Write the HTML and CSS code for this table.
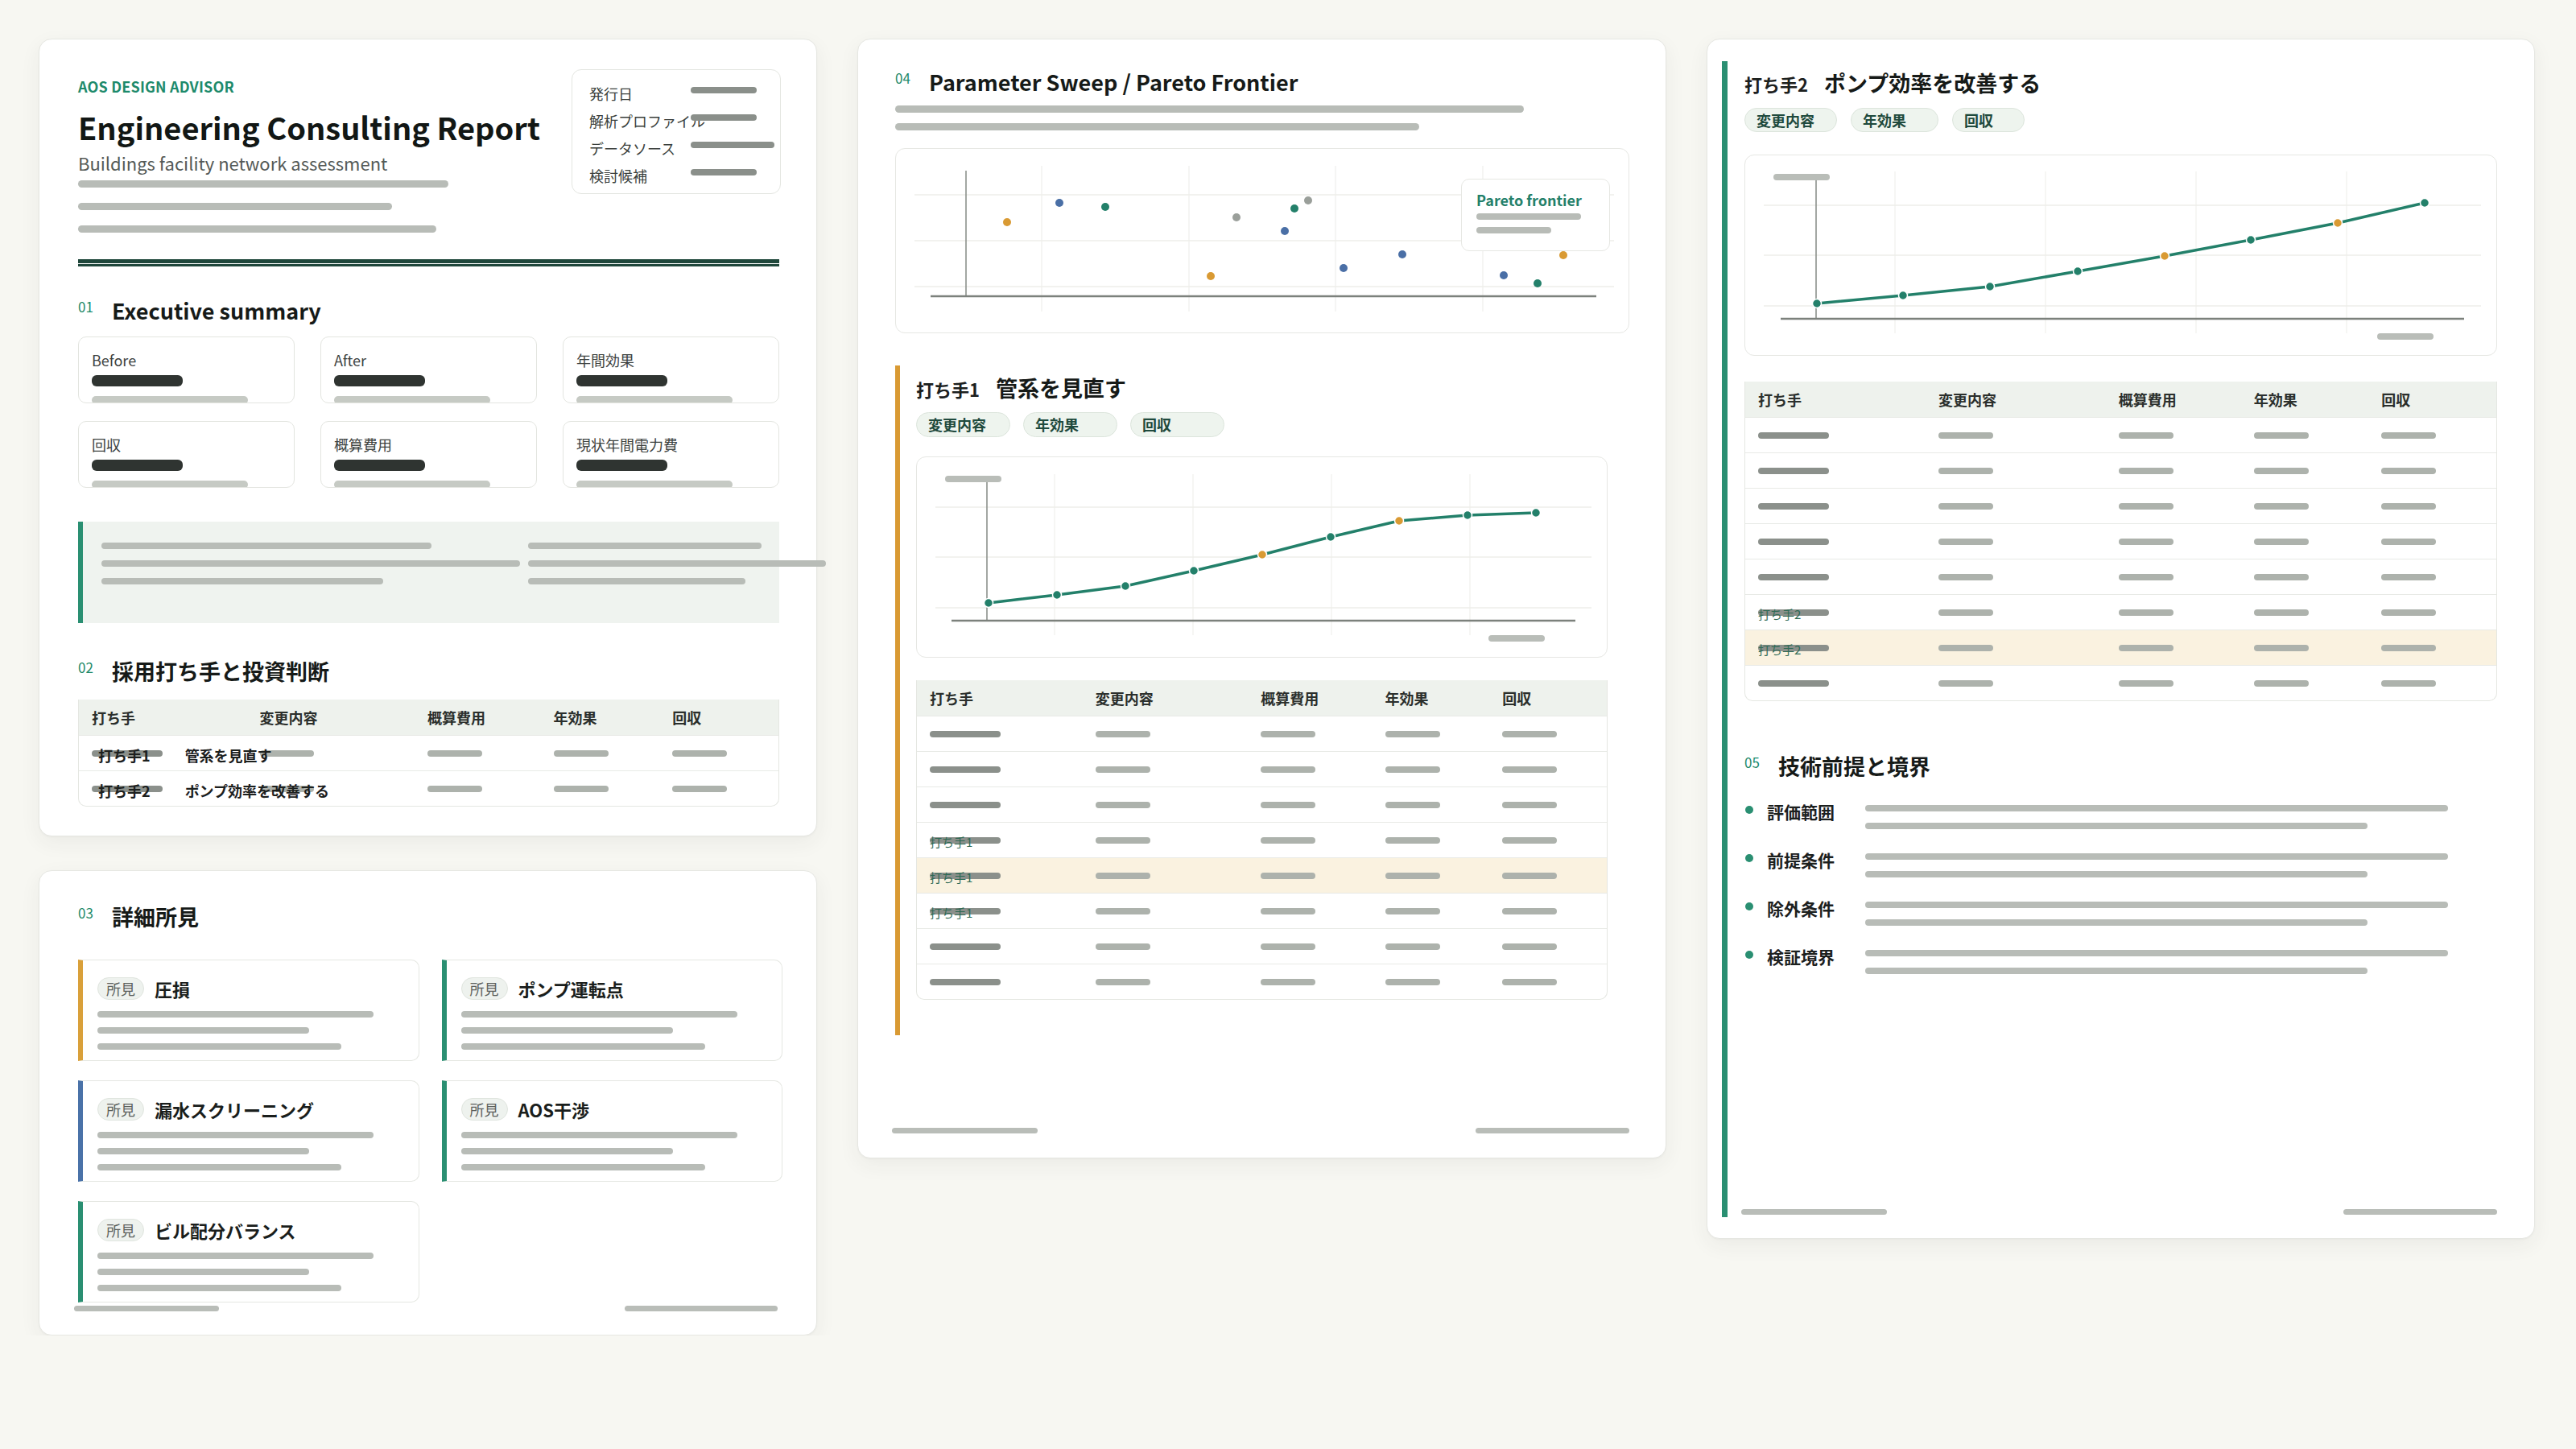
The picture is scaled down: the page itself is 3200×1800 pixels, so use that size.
FILE: index.html
```html
<!DOCTYPE html>
<html lang="ja">
<head>
<meta charset="utf-8">
<title>Engineering Consulting Report</title>
<link rel="stylesheet" href="styles.css">
</head>
<body>
<main class="canvas">
  <div class="stack">
    <section class="card report">
      <header class="report-head">
        <div class="report-title">
          <div class="eyebrow">AOS DESIGN ADVISOR</div>
          <h1 class="title">Engineering Consulting Report</h1>
          <div class="subtitle">Buildings facility network assessment</div>
          <div class="sk-stack gap19">
            <span class="sk h9 w460"></span>
            <span class="sk h9 w390"></span>
            <span class="sk h9 w445"></span>
          </div>
        </div>
        <dl class="meta">
          <dt>発行日</dt><dd><span class="meta-bar w82"></span></dd>
          <dt>解析プロファイル</dt><dd><span class="meta-bar w82"></span></dd>
          <dt>データソース</dt><dd><span class="meta-bar w104"></span></dd>
          <dt>検討候補</dt><dd><span class="meta-bar w82"></span></dd>
        </dl>
      </header>
      <div class="rule"></div>

      <h2 class="sec-h first-sec"><span class="sec-no">01</span><span>Executive summary</span></h2>
      <div class="stats">
        <div class="stat"><div class="stat-label">Before</div><span class="stat-val"></span><span class="stat-sub"></span></div>
        <div class="stat"><div class="stat-label">After</div><span class="stat-val"></span><span class="stat-sub"></span></div>
        <div class="stat"><div class="stat-label">年間効果</div><span class="stat-val"></span><span class="stat-sub"></span></div>
        <div class="stat"><div class="stat-label">回収</div><span class="stat-val"></span><span class="stat-sub"></span></div>
        <div class="stat"><div class="stat-label">概算費用</div><span class="stat-val"></span><span class="stat-sub"></span></div>
        <div class="stat"><div class="stat-label">現状年間電力費</div><span class="stat-val"></span><span class="stat-sub"></span></div>
      </div>
      <div class="callout">
        <div class="sk-stack gap14">
          <span class="sk h8 w410"></span>
          <span class="sk h8 w520"></span>
          <span class="sk h8 w350"></span>
        </div>
        <div class="sk-stack gap14">
          <span class="sk h8 w290"></span>
          <span class="sk h8 w370"></span>
          <span class="sk h8 w270"></span>
        </div>
      </div>

      <h2 class="sec-h sec-02"><span class="sec-no">02</span><span>採用打ち手と投資判断</span></h2>
      <div class="tbl tbl-sm">
        <div class="tr thead">
          <div class="th">打ち手</div><div class="th">変更内容</div><div class="th">概算費用</div><div class="th">年効果</div><div class="th">回収</div>
        </div>
        <div class="tr">
          <div class="td"><span class="cb dark"></span><span class="row-label"><b>打ち手1</b><b>管系を見直す</b></span></div>
          <div class="td"><span class="cb light w67"></span></div><div class="td"><span class="cb light"></span></div><div class="td"><span class="cb light"></span></div><div class="td"><span class="cb light"></span></div>
        </div>
        <div class="tr">
          <div class="td"><span class="cb dark"></span><span class="row-label"><b>打ち手2</b><b>ポンプ効率を改善する</b></span></div>
          <div class="td"><span class="cb light w67"></span></div><div class="td"><span class="cb light"></span></div><div class="td"><span class="cb light"></span></div><div class="td"><span class="cb light"></span></div>
        </div>
      </div>
    </section>

    <section class="card findings">
      <h2 class="sec-h"><span class="sec-no">03</span><span>詳細所見</span></h2>
      <div class="finds">
        <div class="find c-orange">
          <div class="find-head"><span class="tag">所見</span><span class="find-title">圧損</span></div>
          <div class="sk-stack gap12 find-lines"><span class="sk h8 w343"></span><span class="sk h8 w263"></span><span class="sk h8 w303"></span></div>
        </div>
        <div class="find c-green">
          <div class="find-head"><span class="tag">所見</span><span class="find-title">ポンプ運転点</span></div>
          <div class="sk-stack gap12 find-lines"><span class="sk h8 w343"></span><span class="sk h8 w263"></span><span class="sk h8 w303"></span></div>
        </div>
        <div class="find c-blue">
          <div class="find-head"><span class="tag">所見</span><span class="find-title">漏水スクリーニング</span></div>
          <div class="sk-stack gap12 find-lines"><span class="sk h8 w343"></span><span class="sk h8 w263"></span><span class="sk h8 w303"></span></div>
        </div>
        <div class="find c-green">
          <div class="find-head"><span class="tag">所見</span><span class="find-title">AOS干渉</span></div>
          <div class="sk-stack gap12 find-lines"><span class="sk h8 w343"></span><span class="sk h8 w263"></span><span class="sk h8 w303"></span></div>
        </div>
        <div class="find c-green">
          <div class="find-head"><span class="tag">所見</span><span class="find-title">ビル配分バランス</span></div>
          <div class="sk-stack gap12 find-lines"><span class="sk h8 w343"></span><span class="sk h8 w263"></span><span class="sk h8 w303"></span></div>
        </div>
      </div>
      <footer class="foot foot-findings"><span class="fb w180"></span><span class="fb w190"></span></footer>
    </section>
  </div>

  <section class="card sweep">
    <h2 class="sec-h"><span class="sec-no">04</span><span>Parameter Sweep / Pareto Frontier</span></h2>
    <div class="sk-stack gap13 sweep-lines"><span class="sk h9 w781"></span><span class="sk h9 w651"></span></div>
    <div class="scatter">
      <svg width="910" height="228" viewBox="1 1 910 228" aria-hidden="true">
        <g stroke="#efefec" stroke-width="1.2">
          <line x1="182" y1="22" x2="182" y2="203"/><line x1="365" y1="22" x2="365" y2="203"/>
          <line x1="547" y1="22" x2="547" y2="203"/><line x1="730" y1="22" x2="730" y2="203"/>
        </g>
        <g stroke="#eeeeea" stroke-width="1.5">
          <line x1="24" y1="58" x2="893" y2="58"/><line x1="24" y1="115" x2="893" y2="115"/><line x1="24" y1="172" x2="893" y2="172"/>
        </g>
        <line x1="88" y1="28" x2="88" y2="184" stroke="#858a85" stroke-width="1.5"/>
        <line x1="44" y1="184" x2="871" y2="184" stroke="#7c817c" stroke-width="2.4"/>
        <circle cx="139" cy="92" r="5" fill="#d99a33"/>
        <circle cx="204" cy="68" r="5" fill="#4a6fa6"/>
        <circle cx="261" cy="73" r="5" fill="#23806a"/>
        <circle cx="392" cy="159" r="5" fill="#d99a33"/>
        <circle cx="424" cy="86" r="5" fill="#9a9f9a"/>
        <circle cx="496" cy="75" r="5" fill="#23806a"/>
        <circle cx="513" cy="65" r="5" fill="#9a9f9a"/>
        <circle cx="484" cy="103" r="5" fill="#4a6fa6"/>
        <circle cx="557" cy="149" r="5" fill="#4a6fa6"/>
        <circle cx="630" cy="132" r="5" fill="#4a6fa6"/>
        <circle cx="830" cy="133" r="5" fill="#d99a33"/>
        <circle cx="756" cy="158" r="5" fill="#4a6fa6"/>
        <circle cx="798" cy="168" r="5" fill="#23806a"/>
      </svg>
      <div class="legend">
        <div class="legend-title">Pareto frontier</div>
        <div class="sk-stack gap9 legend-lines"><span class="sk h8 w130"></span><span class="sk h8 w93"></span></div>
      </div>
    </div>

    <div class="plan plan-orange">
      <div class="plan-h"><span class="plan-no">打ち手1</span><span class="plan-title">管系を見直す</span></div>
      <div class="chips"><span class="chip">変更内容</span><span class="chip">年効果</span><span class="chip">回収</span></div>
      <div class="linechart lc-mid">
        <svg width="857" height="248" viewBox="1 1 857 248" aria-hidden="true">
          <g stroke="#f0f0ed" stroke-width="1.2">
            <line x1="172" y1="22" x2="172" y2="222"/><line x1="344" y1="22" x2="344" y2="222"/>
            <line x1="516" y1="22" x2="516" y2="222"/><line x1="688" y1="22" x2="688" y2="222"/>
          </g>
          <g stroke="#eeeeea" stroke-width="1.5">
            <line x1="24" y1="63" x2="839" y2="63"/><line x1="24" y1="125" x2="839" y2="125"/><line x1="24" y1="188" x2="839" y2="188"/>
          </g>
          <rect x="36" y="24" width="70" height="8" rx="4" fill="#b9bdb8"/>
          <rect x="711" y="222" width="70" height="8" rx="4" fill="#b9bdb8"/>
          <line x1="88" y1="32" x2="88" y2="204" stroke="#858a85" stroke-width="1.5"/>
          <line x1="44" y1="204" x2="819" y2="204" stroke="#7c817c" stroke-width="2.4"/>
          <polyline points="90,182 175,172 260,161 345,142 430,122 515,100 600,80 685,73 770,70" fill="none" stroke="#23806a" stroke-width="3.5" stroke-linejoin="round" stroke-linecap="round"/>
          <g stroke="#fff" stroke-width="1.5">
            <circle cx="90" cy="182" r="5.5" fill="#23806a"/>
            <circle cx="175" cy="172" r="5.5" fill="#23806a"/>
            <circle cx="260" cy="161" r="5.5" fill="#23806a"/>
            <circle cx="345" cy="142" r="5.5" fill="#23806a"/>
            <circle cx="430" cy="122" r="5.5" fill="#d99a33"/>
            <circle cx="515" cy="100" r="5.5" fill="#23806a"/>
            <circle cx="600" cy="80" r="5.5" fill="#d99a33"/>
            <circle cx="685" cy="73" r="5.5" fill="#23806a"/>
            <circle cx="770" cy="70" r="5.5" fill="#23806a"/>
          </g>
        </svg>
      </div>
      <div class="tbl tbl-mid">
        <div class="tr thead">
          <div class="th">打ち手</div><div class="th">変更内容</div><div class="th">概算費用</div><div class="th">年効果</div><div class="th">回収</div>
        </div>
        <div class="tr"><div class="td"><span class="cb dark"></span></div><div class="td"><span class="cb light"></span></div><div class="td"><span class="cb light"></span></div><div class="td"><span class="cb light"></span></div><div class="td"><span class="cb light"></span></div></div>
        <div class="tr"><div class="td"><span class="cb dark"></span></div><div class="td"><span class="cb light"></span></div><div class="td"><span class="cb light"></span></div><div class="td"><span class="cb light"></span></div><div class="td"><span class="cb light"></span></div></div>
        <div class="tr"><div class="td"><span class="cb dark"></span></div><div class="td"><span class="cb light"></span></div><div class="td"><span class="cb light"></span></div><div class="td"><span class="cb light"></span></div><div class="td"><span class="cb light"></span></div></div>
        <div class="tr"><div class="td"><span class="cb dark"></span><span class="ghost">打ち手1</span></div><div class="td"><span class="cb light"></span></div><div class="td"><span class="cb light"></span></div><div class="td"><span class="cb light"></span></div><div class="td"><span class="cb light"></span></div></div>
        <div class="tr hl"><div class="td"><span class="cb dark"></span><span class="ghost">打ち手1</span></div><div class="td"><span class="cb light"></span></div><div class="td"><span class="cb light"></span></div><div class="td"><span class="cb light"></span></div><div class="td"><span class="cb light"></span></div></div>
        <div class="tr"><div class="td"><span class="cb dark"></span><span class="ghost">打ち手1</span></div><div class="td"><span class="cb light"></span></div><div class="td"><span class="cb light"></span></div><div class="td"><span class="cb light"></span></div><div class="td"><span class="cb light"></span></div></div>
        <div class="tr"><div class="td"><span class="cb dark"></span></div><div class="td"><span class="cb light"></span></div><div class="td"><span class="cb light"></span></div><div class="td"><span class="cb light"></span></div><div class="td"><span class="cb light"></span></div></div>
        <div class="tr"><div class="td"><span class="cb dark"></span></div><div class="td"><span class="cb light"></span></div><div class="td"><span class="cb light"></span></div><div class="td"><span class="cb light"></span></div><div class="td"><span class="cb light"></span></div></div>
      </div>
    </div>
    <footer class="foot foot-page"><span class="fb w181"></span><span class="fb w191"></span></footer>
  </section>

  <section class="card measure">
    <div class="plan plan-green">
      <div class="plan-h"><span class="plan-no">打ち手2</span><span class="plan-title">ポンプ効率を改善する</span></div>
      <div class="chips"><span class="chip chip-a">変更内容</span><span class="chip chip-b">年効果</span><span class="chip chip-c">回収</span></div>
      <div class="linechart lc-right">
        <svg width="933" height="248" viewBox="1 1 933 248" aria-hidden="true">
          <g stroke="#f0f0ed" stroke-width="1.2">
            <line x1="187" y1="21" x2="187" y2="222"/><line x1="374" y1="21" x2="374" y2="222"/>
            <line x1="561" y1="21" x2="561" y2="222"/><line x1="748" y1="21" x2="748" y2="222"/>
          </g>
          <g stroke="#eeeeea" stroke-width="1.5">
            <line x1="24" y1="63" x2="915" y2="63"/><line x1="24" y1="125" x2="915" y2="125"/><line x1="24" y1="188" x2="915" y2="188"/>
          </g>
          <rect x="36" y="24" width="70" height="8" rx="4" fill="#b9bdb8"/>
          <rect x="786" y="222" width="70" height="8" rx="4" fill="#b9bdb8"/>
          <line x1="89" y1="32" x2="89" y2="204" stroke="#858a85" stroke-width="1.5"/>
          <line x1="45" y1="204" x2="894" y2="204" stroke="#7c817c" stroke-width="2.4"/>
          <polyline points="90,185 197,175 305,164 414,145 522,126 629,106 737,85 845,60" fill="none" stroke="#23806a" stroke-width="3.5" stroke-linejoin="round" stroke-linecap="round"/>
          <g stroke="#fff" stroke-width="1.5">
            <circle cx="90" cy="185" r="5.5" fill="#23806a"/>
            <circle cx="197" cy="175" r="5.5" fill="#23806a"/>
            <circle cx="305" cy="164" r="5.5" fill="#23806a"/>
            <circle cx="414" cy="145" r="5.5" fill="#23806a"/>
            <circle cx="522" cy="126" r="5.5" fill="#d99a33"/>
            <circle cx="629" cy="106" r="5.5" fill="#23806a"/>
            <circle cx="737" cy="85" r="5.5" fill="#d99a33"/>
            <circle cx="845" cy="60" r="5.5" fill="#23806a"/>
          </g>
        </svg>
      </div>
      <div class="tbl tbl-right">
        <div class="tr thead">
          <div class="th">打ち手</div><div class="th">変更内容</div><div class="th">概算費用</div><div class="th">年効果</div><div class="th">回収</div>
        </div>
        <div class="tr"><div class="td"><span class="cb dark"></span></div><div class="td"><span class="cb light"></span></div><div class="td"><span class="cb light"></span></div><div class="td"><span class="cb light"></span></div><div class="td"><span class="cb light"></span></div></div>
        <div class="tr"><div class="td"><span class="cb dark"></span></div><div class="td"><span class="cb light"></span></div><div class="td"><span class="cb light"></span></div><div class="td"><span class="cb light"></span></div><div class="td"><span class="cb light"></span></div></div>
        <div class="tr"><div class="td"><span class="cb dark"></span></div><div class="td"><span class="cb light"></span></div><div class="td"><span class="cb light"></span></div><div class="td"><span class="cb light"></span></div><div class="td"><span class="cb light"></span></div></div>
        <div class="tr"><div class="td"><span class="cb dark"></span></div><div class="td"><span class="cb light"></span></div><div class="td"><span class="cb light"></span></div><div class="td"><span class="cb light"></span></div><div class="td"><span class="cb light"></span></div></div>
        <div class="tr"><div class="td"><span class="cb dark"></span></div><div class="td"><span class="cb light"></span></div><div class="td"><span class="cb light"></span></div><div class="td"><span class="cb light"></span></div><div class="td"><span class="cb light"></span></div></div>
        <div class="tr"><div class="td"><span class="cb dark"></span><span class="ghost">打ち手2</span></div><div class="td"><span class="cb light"></span></div><div class="td"><span class="cb light"></span></div><div class="td"><span class="cb light"></span></div><div class="td"><span class="cb light"></span></div></div>
        <div class="tr hl"><div class="td"><span class="cb dark"></span><span class="ghost">打ち手2</span></div><div class="td"><span class="cb light"></span></div><div class="td"><span class="cb light"></span></div><div class="td"><span class="cb light"></span></div><div class="td"><span class="cb light"></span></div></div>
        <div class="tr"><div class="td"><span class="cb dark"></span></div><div class="td"><span class="cb light"></span></div><div class="td"><span class="cb light"></span></div><div class="td"><span class="cb light"></span></div><div class="td"><span class="cb light"></span></div></div>
      </div>

      <h2 class="sec-h sec-05"><span class="sec-no">05</span><span>技術前提と境界</span></h2>
      <ul class="assume-list">
        <li class="assume"><span class="dot"></span><span class="assume-label">評価範囲</span><span class="sk-stack gap14 assume-lines"><span class="sk h8 w724"></span><span class="sk h8 w624"></span></span></li>
        <li class="assume"><span class="dot"></span><span class="assume-label">前提条件</span><span class="sk-stack gap14 assume-lines"><span class="sk h8 w724"></span><span class="sk h8 w624"></span></span></li>
        <li class="assume"><span class="dot"></span><span class="assume-label">除外条件</span><span class="sk-stack gap14 assume-lines"><span class="sk h8 w724"></span><span class="sk h8 w624"></span></span></li>
        <li class="assume"><span class="dot"></span><span class="assume-label">検証境界</span><span class="sk-stack gap14 assume-lines"><span class="sk h8 w724"></span><span class="sk h8 w624"></span></span></li>
      </ul>
      <footer class="foot foot-page"><span class="fb w181"></span><span class="fb w191"></span></footer>
    </div>
  </section>
</main>
</body>
</html>
```

FILE: styles.css
```css
* { box-sizing: border-box; }
html { background: #f7f7f2; }
body {
  margin: 0;
  background: #f7f7f2;
  font-family: "Noto Sans CJK JP", "Noto Sans", sans-serif;
  color: #1c201e;
}
h1, h2, dl, dd, ul { margin: 0; padding: 0; }

.canvas {
  display: flex;
  align-items: flex-start;
  gap: 50px;
  padding: 48px 0 0 48px;
}
.stack { display: flex; flex-direction: column; gap: 42px; width: 967px; flex: none; }

.card {
  background: #fff;
  border: 1px solid #e6e7e2;
  border-radius: 16px;
  box-shadow: 0 8px 26px rgba(45, 55, 45, 0.06), 0 1px 2px rgba(0, 0, 0, 0.03);
}

/* skeleton primitives */
.sk-stack { display: flex; flex-direction: column; align-items: flex-start; }
.gap9 { gap: 9px; } .gap12 { gap: 12px; } .gap13 { gap: 13px; } .gap14 { gap: 14px; } .gap19 { gap: 19px; }
.sk { display: block; background: #b8bcb7; border-radius: 6px; flex: none; }
.h8 { height: 8px; } .h9 { height: 9px; }
.w82 { width: 82px; } .w93 { width: 93px; } .w104 { width: 104px; } .w130 { width: 130px; }
.w180 { width: 180px; } .w181 { width: 181px; } .w190 { width: 190px; } .w191 { width: 191px; }
.w263 { width: 263px; } .w270 { width: 270px; } .w290 { width: 290px; } .w303 { width: 303px; }
.w343 { width: 343px; } .w350 { width: 350px; } .w370 { width: 370px; } .w390 { width: 390px; }
.w410 { width: 410px; } .w445 { width: 445px; } .w460 { width: 460px; } .w520 { width: 520px; }
.w624 { width: 624px; } .w651 { width: 651px; } .w724 { width: 724px; } .w781 { width: 781px; }

/* ---------- report card ---------- */
.report { height: 991px; padding: 38px 46px 0 48px; }
.report-head { display: flex; justify-content: space-between; align-items: flex-start; }
.report-title { margin-top: 9px; }
.eyebrow {
  font-size: 18px; line-height: 22px; font-weight: 700;
  color: #1d8a6b; letter-spacing: 0.01em;
}
.title {
  margin-top: 17px;
  font-size: 38px; line-height: 46px; font-weight: 700;
  color: #121715;
}
.subtitle { margin-top: 7px; font-size: 22px; line-height: 28px; color: #555a57; }
.report-title .sk-stack { margin-top: 8px; }

.meta {
  margin: -1px -2px 0 0;
  width: 260px; height: 155px;
  border: 1px solid #e4e6e1; border-radius: 12px;
  padding: 12px 10px 0 21px;
  display: grid;
  grid-template-columns: 126px 1fr;
  grid-auto-rows: 34px;
}
.meta dt { font-size: 18px; line-height: 34px; color: #3a3f3c; white-space: nowrap; }
.meta dd { display: flex; align-items: center; }
.meta-bar { display: block; height: 8px; border-radius: 4px; background: #8a8f8a; margin-bottom: 8px; }

.rule {
  margin-top: 33px;
  height: 9px;
  border-top: 5px solid #1f473b;
  border-bottom: 3px solid #1f473b;
}

.sec-h {
  display: flex; align-items: flex-start;
  font-size: 27px; line-height: 34px; font-weight: 700; color: #161a18;
}
.sec-no {
  flex: none; width: 42px;
  font-size: 17px; line-height: 18px; margin-top: 3px;
  font-weight: 400; color: #1d8a6b;
}
.first-sec { margin-top: 38px; }

.stats {
  margin-top: 15px;
  display: grid;
  grid-template-columns: repeat(3, 1fr);
  column-gap: 32px; row-gap: 22px;
}
.stat {
  height: 83px;
  border: 1px solid #e3e5e0; border-radius: 10px;
  padding: 17px 16px 0;
  overflow: hidden;
}
.stat-label { font-size: 18px; line-height: 22px; color: #3d423f; }
.stat-val { display: block; width: 113px; height: 14px; border-radius: 6px; background: #2f3431; margin-top: 8px; }
.stat-sub { display: block; width: 194px; height: 10px; border-radius: 5px; background: #c6cac4; margin-top: 12px; }

.callout {
  margin-top: 42px;
  height: 126px;
  border-left: 6px solid #2a8f72;
  background: #eff3ef;
  padding: 26px 0 0 23px;
  display: grid;
  grid-template-columns: 520px auto;
  column-gap: 10px;
  align-content: start;
}

.sec-02 { margin-top: 43px; }

/* ---------- tables ---------- */
.tbl {
  margin-top: 18px;
  border: 1px solid #e5e7e2; border-top: none;
  border-radius: 0 0 10px 10px;
  overflow: hidden;
}
.tr {
  display: grid;
  grid-template-columns: 24% 24% 18% 17% 17%;
  height: 44px;
  border-top: 1px solid #e8eae6;
}
.thead { background: #eef2ed; border-top: none; }
.tr.hl { background: #faf2e0; }
.th {
  padding-left: 16px;
  display: flex; align-items: center;
  font-size: 18px; font-weight: 700; color: #2b2f2c;
}
.td { position: relative; padding-left: 16px; display: flex; align-items: center; }
.cb { display: block; height: 8px; border-radius: 4px; }
.cb.dark { width: 88px; background: #8b908b; }
.cb.light { width: 68px; background: #adb2ac; }
.cb.light.w67 { width: 67px; }
.row-label {
  position: absolute; left: 24px; top: 50%; z-index: 1;
  transform: translateY(-40%);
  display: flex; gap: 43px;
  white-space: nowrap;
  font-size: 18px; line-height: 22px; font-weight: 700; color: #1c201e;
}
.row-label b { font-weight: 700; }
.ghost {
  position: absolute; left: 16px; top: 50%; z-index: 1;
  transform: translateY(-38%);
  white-space: nowrap;
  font-size: 15px; line-height: 18px; color: #2f6a55;
}

/* ---------- findings card ---------- */
.findings { height: 578px; padding: 40px 46px 0 48px; display: flex; flex-direction: column; }
.finds {
  margin: 36px -4px 0 0;
  display: grid;
  grid-template-columns: 1fr 1fr;
  column-gap: 28px; row-gap: 24px;
}
.find {
  height: 126px;
  border: 1px solid #e5e7e2; border-left: 6px solid #2a8f72;
  border-radius: 0 10px 10px 0;
  padding: 21px 16px 0 18px;
}
.c-orange { border-left-color: #d9a03a; }
.c-green { border-left-color: #2a8f72; }
.c-blue { border-left-color: #4a72a8; }
.find-head { display: flex; align-items: center; gap: 13px; }
.tag {
  height: 28px; padding: 0 10px;
  border-radius: 14px;
  background: #eef2ee; border: 1px solid #e0e5df;
  font-size: 18px; line-height: 26px; color: #5b605c;
}
.find-title { font-size: 22px; line-height: 28px; font-weight: 700; color: #1a1e1c; }
.find-lines { margin-top: 14px; }

.foot { display: flex; justify-content: space-between; align-items: center; }
.fb { display: block; height: 7px; border-radius: 4px; background: #b9bdb8; }
.foot-findings { margin: 4px 2px 0 -5px; }
.foot-page { margin: auto 0 0 -4px; }

/* ---------- sweep card ---------- */
.sweep {
  width: 1005px; height: 1391px; flex: none;
  padding: 36px 45px 30px 46px;
  display: flex; flex-direction: column;
}
.sweep-lines { margin-top: 12px; }
.scatter {
  position: relative;
  margin-top: 22px;
  height: 230px;
  border: 1px solid #e6e7e3; border-radius: 12px;
}
.scatter svg, .linechart svg { display: block; }
.legend {
  position: absolute; left: 702px; top: 37px;
  width: 185px; height: 90px;
  background: #fff;
  border: 1px solid #e6e7e3; border-radius: 10px;
  padding: 14px 0 0 18px;
}
.legend-title { font-size: 18px; line-height: 22px; font-weight: 700; color: #23806a; }
.legend-lines { margin-top: 6px; }

.plan { margin-top: 40px; border-left: 6px solid #d99a33; padding: 11px 27px 44px 20px; }
.plan-h { display: flex; align-items: baseline; gap: 20px; line-height: 34px; }
.plan-no { font-size: 22px; font-weight: 700; color: #1c201e; }
.plan-title { font-size: 27px; font-weight: 700; color: #161a18; }
.chips { margin-top: 12px; display: flex; gap: 16px; }
.chip {
  width: 117px; height: 31px;
  border-radius: 16px;
  background: #eef4ee; border: 1px solid #dce5dc;
  padding-left: 14px;
  font-size: 18px; line-height: 29px; font-weight: 700; color: #1f4a3d;
}
.linechart { height: 250px; border: 1px solid #e6e7e3; border-radius: 12px; }
.lc-mid { margin-top: 24px; }
.tbl-mid { margin-top: 28px; }

/* ---------- measure card ---------- */
.measure {
  width: 1029px; height: 1491px; flex: none;
  padding: 27px 20px 26px 18px;
  display: flex; flex-direction: column;
}
.plan-green {
  margin-top: 0;
  flex: 1;
  display: flex; flex-direction: column;
  border-left: 7px solid #2a8f72;
  padding: 10px 26px 3px 21px;
}
.plan-green .chips { gap: 17px; margin-top: 13px; }
.plan-green .chip { height: 30px; line-height: 28px; }
.chip-a { width: 115px; }
.chip-b { width: 109px; }
.chip-c { width: 90px; }
.lc-right { margin-top: 28px; }
.tbl-right { margin-top: 32px; }
.sec-05 { margin-top: 64px; }

.assume-list { list-style: none; margin-top: 25px; }
.assume { display: grid; grid-template-columns: 28px 122px 1fr; height: 60px; align-items: start; }
.dot { width: 10px; height: 10px; border-radius: 50%; background: #2a8f72; margin-top: 7px; margin-left: 1px; }
.assume-label { font-size: 21px; line-height: 28px; font-weight: 700; color: #1c201e; }
.assume-lines { margin-top: 6px; }
```
